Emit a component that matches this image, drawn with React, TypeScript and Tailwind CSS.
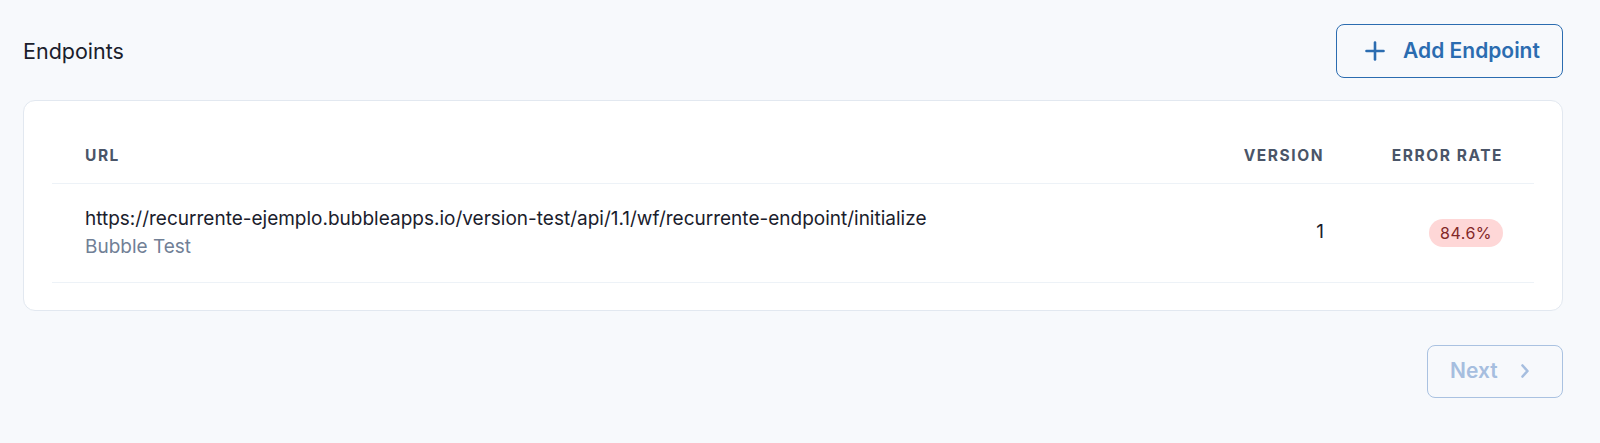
import * as React from "react";

const endpoints = [
  {
    url: "https://recurrente-ejemplo.bubbleapps.io/version-test/api/1.1/wf/recurrente-endpoint/initialize",
    description: "Bubble Test",
    version: 1,
    errorRate: "84.6%",
  },
];

function PlusIcon() {
  return (
    <svg width="20" height="20" viewBox="0 0 20 20" fill="none" stroke="currentColor" strokeWidth={2.6} strokeLinecap="round">
      <line x1="10" y1="1.5" x2="10" y2="18.5" />
      <line x1="1.5" y1="10" x2="18.5" y2="10" />
    </svg>
  );
}

function ChevronRight() {
  return (
    <svg width="10" height="14" viewBox="0 0 10 14" fill="none" stroke="currentColor" strokeWidth={2.6} strokeLinecap="round" strokeLinejoin="round">
      <polyline points="2.5,1.5 7.5,7 2.5,12.5" />
    </svg>
  );
}

export default function App() {
  return (
    <div className="min-h-[443px] bg-[#f7f9fc] pl-[23px] pr-[37px] pt-[24px] font-['Inter',sans-serif] text-[#1a202c]">
      <div className="flex items-center justify-between">
        <h2 className="text-[21.5px] font-normal">Endpoints</h2>
        <button className="flex h-[54px] w-[227px] items-center justify-center gap-[18px] pl-[6px] rounded-[8px] border-[1.5px] border-[#2b6cb0] text-[21px] font-semibold text-[#2b6cb0]">
          <PlusIcon />
          Add Endpoint
        </button>
      </div>

      <div className="mt-[22px] rounded-[12px] border border-[#e2e8f0] bg-white px-[28px] py-[27px]">
        <table className="w-full border-collapse">
          <thead>
            <tr className="border-b border-[#edf2f7]">
              <th className="h-[55px] pl-[33px] text-left text-[15.5px] font-bold uppercase tracking-[0.1em] text-[#4a5568]">URL</th>
              <th className="h-[55px] w-[160px] pr-[30px] text-right text-[15.5px] font-bold uppercase tracking-[0.1em] text-[#4a5568]">Version</th>
              <th className="h-[55px] w-[180px] pr-[31px] text-right text-[15.5px] font-bold uppercase tracking-[0.1em] text-[#4a5568]">Error Rate</th>
            </tr>
          </thead>
          <tbody>
            {endpoints.map((e) => (
              <tr key={e.url} className="border-b border-[#edf2f7]">
                <td className="h-[99px] pl-[33px] text-[19px] leading-[27.5px]">
                  <div>{e.url}</div>
                  <div className="text-[#718096]">{e.description}</div>
                </td>
                <td className="pr-[30px] text-right text-[19px]">{e.version}</td>
                <td className="pr-[31px] text-right">
                  <span className="inline-block rounded-full bg-[#fed7d7] px-[11px] py-[2px] text-[16px] leading-[24px] tracking-[0.03em] text-[#822727]">
                    {e.errorRate}
                  </span>
                </td>
              </tr>
            ))}
          </tbody>
        </table>
      </div>

      <div className="mt-[34px] flex justify-end">
        <button
          disabled
          className="flex h-[53px] w-[136px] items-center gap-[22px] pl-[22px] rounded-[8px] border-[1.5px] border-[#aac2e1] text-[21px] font-semibold text-[#a6bedf]"
        >
          Next
          <ChevronRight />
        </button>
      </div>
    </div>
  );
}
